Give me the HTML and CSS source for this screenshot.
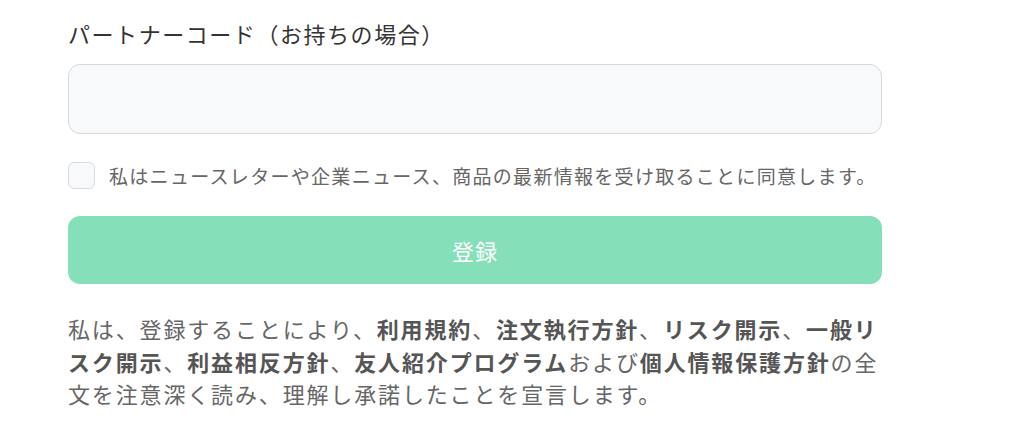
FILE: index.html
```html
<!DOCTYPE html>
<html lang="ja">
<head>
  <meta charset="UTF-8">
  <meta name="viewport" content="width=device-width, initial-scale=1.0">
  <title>登録</title>
  <link rel="stylesheet" href="styles.css">
</head>
<body>
  <main class="signup">
    <form class="signup-form">
      <label class="field-label" for="partnerCode">パートナーコード（お持ちの場合）</label>
      <input class="text-input" type="text" id="partnerCode" name="partnerCode">

      <label class="consent">
        <input type="checkbox" name="newsletter">
        <span class="box"></span>
        <span class="consent-text">私はニュースレターや企業ニュース、商品の最新情報を受け取ることに同意します。</span>
      </label>

      <button class="submit" type="submit">登録</button>
    </form>

    <p class="terms">私は、登録することにより、<b>利用規約</b>、<b>注文執行方針</b>、<b>リスク開示</b>、<b>一般リスク開示</b>、<b>利益相反方針</b>、<b>友人紹介プログラム</b>および<b>個人情報保護方針</b>の全文を注意深く読み、理解し承諾したことを宣言します。</p>
  </main>
</body>
</html>
```

FILE: styles.css
```css
* {
  box-sizing: border-box;
}
body {
  margin: 0;
  padding: 0;
  background: #fff;
  font-family: "Noto Sans CJK JP", "Noto Sans", sans-serif;
  color: #333;
}
.signup {
  width: 814px;
  margin-left: 68px;
  padding-top: 17px;
}
.signup-form {
  display: flex;
  flex-direction: column;
}
.field-label {
  font-size: 22px;
  letter-spacing: 1.55px;
  line-height: 32px;
  color: #333;
}
.text-input {
  margin-top: 15px;
  height: 70px;
  width: 100%;
  border: 1.5px solid #d6d8dd;
  border-radius: 12px;
  background: #f8f9fb;
  font-size: 20px;
  padding: 0 18px;
}
.consent {
  margin-top: 28px;
  display: flex;
  align-items: center;
  gap: 14px;
  cursor: pointer;
}
.consent input {
  display: none;
}
.consent .box {
  width: 27px;
  height: 27px;
  flex: none;
  border: 1.5px solid #d9dbe0;
  border-radius: 6px;
  background: #f8f9fb;
}
.consent-text {
  font-size: 19px;
  letter-spacing: 1.3px;
  line-height: 26px;
  color: #666;
}
.submit {
  margin-top: 27px;
  height: 68px;
  border: none;
  border-radius: 12px;
  background: #85e0ba;
  color: #fff;
  font-family: inherit;
  font-size: 22px;
  letter-spacing: 1px;
  cursor: pointer;
}
.terms {
  margin: 28px 0 0;
  font-size: 22px;
  letter-spacing: 1.85px;
  line-height: 32.5px;
  color: #666;
}
.terms b {
  font-weight: 700;
  color: #555;
}
```
